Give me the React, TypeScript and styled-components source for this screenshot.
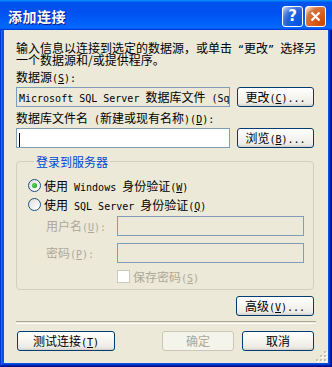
import React from 'react';
import styled, { createGlobalStyle } from 'styled-components';

const GlobalStyle = createGlobalStyle`
  html, body {
    margin: 0;
    padding: 0;
    background: #ece9d8;
  }
  body {
    font-family: "Noto Sans CJK SC", "Noto Sans", sans-serif;
    font-size: 12px;
    line-height: 12px;
    color: #000;
  }
`;

const Window = styled.div`
  width: 332px;
  height: 367px;
  display: flex;
  flex-direction: column;
  overflow: hidden;
`;

const TitleBar = styled.div`
  flex: none;
  height: 30px;
  box-sizing: border-box;
  display: flex;
  align-items: center;
  gap: 2px;
  padding: 2px 6px 0 8px;
  background: linear-gradient(
    180deg,
    #0997ff,
    #0053ee 8%,
    #0050ee 40%,
    #06f 88%,
    #06f 93%,
    #005bff 95%,
    #003dd7 96%,
    #003dd7
  );
`;

const Title = styled.div`
  flex: 1;
  color: #fff;
  font-weight: 700;
  font-size: 14px;
  line-height: 14px;
  letter-spacing: 0.5px;
  text-shadow: 1px 1px #0f1089;
`;

const TitleButton = styled.div<{ $kind: 'help' | 'close' }>`
  width: 21px;
  height: 21px;
  box-sizing: border-box;
  border: 1px solid #fff;
  border-radius: 3px;
  display: flex;
  align-items: center;
  justify-content: center;
  color: #fff;
  font-family: "DejaVu Sans", sans-serif;
  font-weight: 700;
  font-size: 15px;
  background: ${({ $kind }) =>
    $kind === 'close'
      ? 'radial-gradient(circle at 90% 90%, #cc4600 0%, #dc6527 55%, #cd7546 70%, #ffccb2 90%, #fff 100%)'
      : 'radial-gradient(circle at 90% 90%, #0054e9 0%, #2263d5 55%, #4479e4 70%, #a3bbec 90%, #fff 100%)'};
`;

const Frame = styled.div`
  flex: 1;
  display: flex;
  padding: 0 4px 4px 4px;
  background: #0855dd;
  box-shadow: inset -1px -1px #00138c, inset 1px 0 #0831d9, inset -2px -2px #001ea0,
    inset 2px 0 #166aee, inset -3px -3px #003bda, inset 3px 0 #0855dd;
`;

const Body = styled.div`
  position: relative;
  flex: 1;
  min-width: 0;
  display: flex;
  flex-direction: column;
  padding: 12px 14px 0 12px;
  background: #ece9d8;
`;

const Intro = styled.div`
  white-space: nowrap;
`;

const Label = styled.div<{ $disabled?: boolean }>`
  margin-top: 5px;
  white-space: nowrap;
  color: ${({ $disabled }) => ($disabled ? '#aca899' : '#000')};
`;

const Mono = styled.span`
  font-family: "DejaVu Sans Mono", "Liberation Mono", monospace;
  font-size: 10px;
  line-height: 0;
`;

const FieldRow = styled.div`
  display: flex;
  gap: 7px;
  margin-top: 4px;
`;

const TextBox = styled.div<{ $bg?: string; $caret?: boolean; $w?: number }>`
  ${({ $w }) => ($w ? `width: ${$w}px; flex: none;` : 'flex: 1;')}
  min-width: 0;
  height: 20px;
  box-sizing: border-box;
  border: 1px solid #7f9db9;
  background: ${({ $bg }) => $bg || '#fff'};
  padding: 0 2px;
  line-height: 18px;
  overflow: hidden;
  white-space: nowrap;

  ${({ $caret }) =>
    $caret &&
    `&::before {
      content: '';
      display: inline-block;
      vertical-align: middle;
      width: 1px;
      height: 14px;
      background: #000;
    }`}
`;

const Button = styled.button<{ $w: number }>`
  width: ${({ $w }) => $w}px;
  height: 20px;
  flex: none;
  box-sizing: border-box;
  padding: 0;
  font: inherit;
  line-height: 12px;
  color: #000;
  border: 1px solid #003c74;
  border-radius: 3px;
  white-space: nowrap;
  background: linear-gradient(180deg, #fff 0%, #f6f5f0 45%, #ecebe6 85%, #d6d0c5 100%);

  &:disabled {
    border-color: #c9c7ba;
    background: #f5f4ea;
    color: #aca899;
  }
`;

const Group = styled.fieldset`
  margin: 7px 0 0 0;
  min-width: 0;
  padding: 8px 9px 6px 11px;
  border: 1px solid #d0d0bf;
  border-radius: 4px;
`;

const Legend = styled.legend`
  margin-left: 6px;
  padding: 0 2px;
  color: #0046d5;
  line-height: 13px;
`;

const OptionRow = styled.div`
  height: 19px;
  display: flex;
  align-items: center;
  gap: 3px;
  white-space: nowrap;
`;

const Radio = styled.span<{ $checked?: boolean }>`
  width: 13px;
  height: 13px;
  box-sizing: border-box;
  border: 1px solid #1c5180;
  border-radius: 50%;
  background: linear-gradient(135deg, #dcdcd7 0%, #fff 90%);
  display: flex;
  align-items: center;
  justify-content: center;

  &::after {
    content: '';
    display: ${({ $checked }) => ($checked ? 'block' : 'none')};
    width: 5px;
    height: 5px;
    border-radius: 50%;
    background: radial-gradient(circle at 40% 40%, #5fe25f 0%, #21a121 70%);
  }
`;

const CredRow = styled.div<{ $gap: number }>`
  display: flex;
  align-items: center;
  margin-top: ${({ $gap }) => $gap}px;
`;

const CredLabel = styled.div`
  width: 71px;
  padding-left: 18px;
  color: #aca899;
  white-space: nowrap;
`;

const CheckRow = styled.div`
  display: flex;
  align-items: center;
  gap: 3px;
  margin: 7px 0 0 89px;
  color: #aca899;
  white-space: nowrap;
`;

const Checkbox = styled.span`
  width: 13px;
  height: 13px;
  box-sizing: border-box;
  border: 1px solid #cac8bb;
  background: #fff;
`;

const ActionRow = styled.div`
  display: flex;
  justify-content: flex-end;
  margin-top: 6px;
`;

const Separator = styled.div`
  margin: 5px -2px 0 0;
  height: 1px;
  border-top: 1px solid #aca899;
  border-bottom: 1px solid #fff;
`;

const Footer = styled.div`
  display: flex;
  gap: 8px;
  margin-top: 7px;

  & > :first-child {
    margin: 0 auto 0 1px;
  }
`;

const Grip = styled.svg`
  position: absolute;
  right: 1px;
  bottom: 1px;
`;

const Key = ({ k }: { k: string }) => (
  <Mono>
    (<u>{k}</u>)
  </Mono>
);

const SizeGrip = () => {
  const dots = [
    [8, 0],
    [4, 4],
    [8, 4],
    [0, 8],
    [4, 8],
    [8, 8],
  ];
  return (
    <Grip width="11" height="11" viewBox="0 0 11 11">
      {dots.map(([x, y]) => (
        <g key={`${x}-${y}`}>
          <rect x={x + 1} y={y + 1} width="2" height="2" fill="#fff" />
          <rect x={x} y={y} width="2" height="2" fill="#c5c2b2" />
        </g>
      ))}
    </Grip>
  );
};

const App = () => (
  <Window>
    <GlobalStyle />
    <TitleBar>
      <Title>添加连接</Title>
      <TitleButton $kind="help">?</TitleButton>
      <TitleButton $kind="close">
        <svg width="11" height="11" viewBox="0 0 11 11">
          <path d="M1.5 1.5 L9.5 9.5 M9.5 1.5 L1.5 9.5" stroke="#fff" strokeWidth="2.2" />
        </svg>
      </TitleButton>
    </TitleBar>
    <Frame>
      <Body>
        <Intro>
          输入信息以连接到选定的数据源，或单击<Mono> “</Mono>更改<Mono>” </Mono>选择另
          <br />
          一个数据源和/或提供程序。
        </Intro>

        <Label>
          数据源<Key k="S" />
          <Mono>:</Mono>
        </Label>
        <FieldRow>
          <TextBox $bg="#ece9d8">
            <Mono>Microsoft SQL Server </Mono>数据库文件<Mono> (SqlClient)</Mono>
          </TextBox>
          <Button $w={77}>
            更改<Key k="C" />
            <Mono>...</Mono>
          </Button>
        </FieldRow>

        <Label>
          数据库文件名<Mono> (</Mono>新建或现有名称<Mono>)</Mono>
          <Key k="D" />
          <Mono>:</Mono>
        </Label>
        <FieldRow>
          <TextBox $caret />
          <Button $w={77}>
            浏览<Key k="B" />
            <Mono>...</Mono>
          </Button>
        </FieldRow>

        <Group>
          <Legend>登录到服务器</Legend>
          <OptionRow>
            <Radio $checked />
            <span>
              使用<Mono> Windows </Mono>身份验证<Key k="W" />
            </span>
          </OptionRow>
          <OptionRow>
            <Radio />
            <span>
              使用<Mono> SQL Server </Mono>身份验证<Key k="Q" />
            </span>
          </OptionRow>
          <CredRow $gap={2}>
            <CredLabel>
              用户名<Key k="U" />
              <Mono>:</Mono>
            </CredLabel>
            <TextBox $bg="#ece9d8" $w={187} />
          </CredRow>
          <CredRow $gap={7}>
            <CredLabel>
              密码<Key k="P" />
              <Mono>:</Mono>
            </CredLabel>
            <TextBox $bg="#ece9d8" $w={187} />
          </CredRow>
          <CheckRow>
            <Checkbox />
            <span>
              保存密码<Key k="S" />
            </span>
          </CheckRow>
        </Group>

        <ActionRow>
          <Button $w={78}>
            高级<Key k="V" />
            <Mono>...</Mono>
          </Button>
        </ActionRow>

        <Separator />

        <Footer>
          <Button $w={98}>
            测试连接<Key k="T" />
          </Button>
          <Button $w={72} disabled>
            确定
          </Button>
          <Button $w={72}>取消</Button>
        </Footer>

        <SizeGrip />
      </Body>
    </Frame>
  </Window>
);

export default App;
